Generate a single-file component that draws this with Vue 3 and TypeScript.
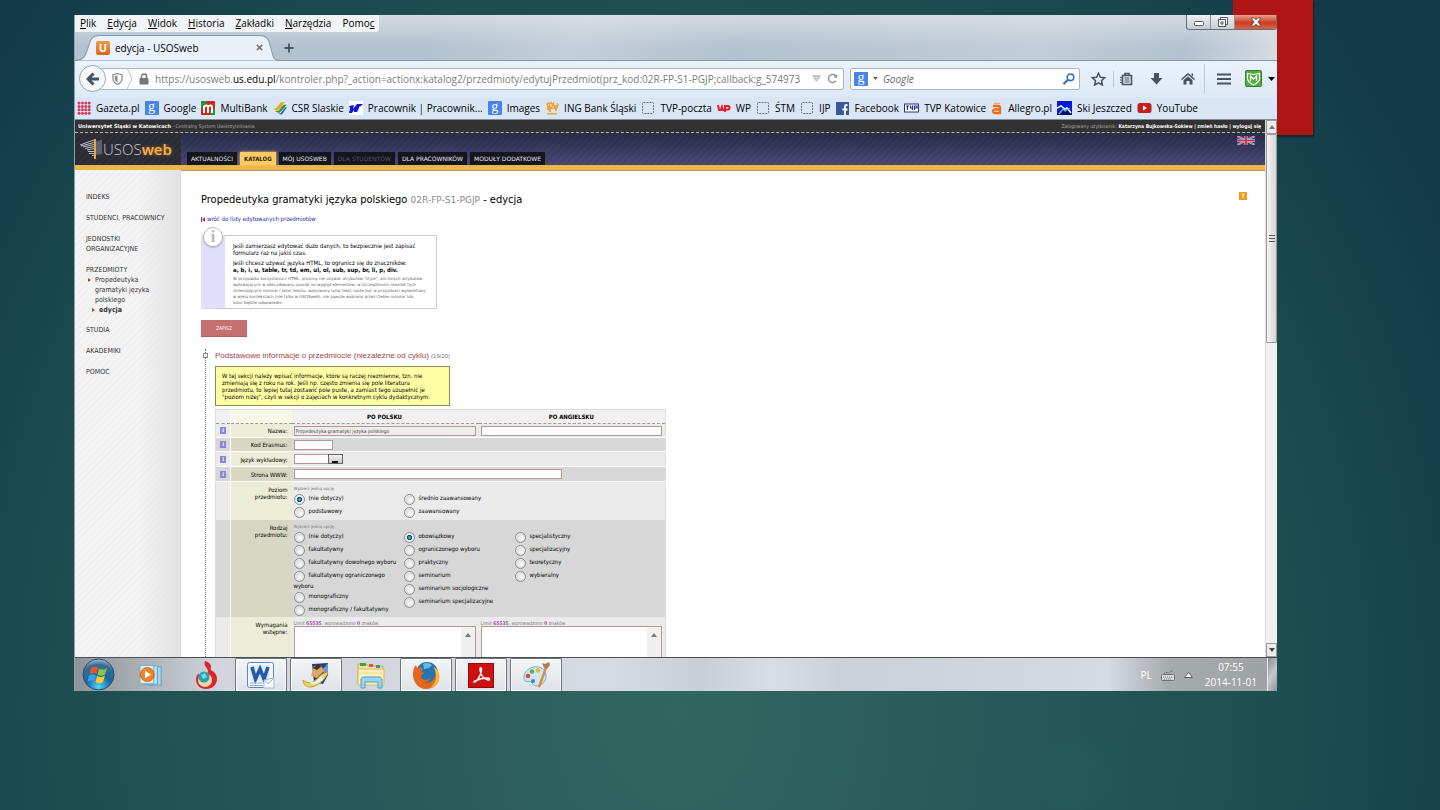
<script setup lang="ts">
import { ref } from 'vue'

interface Bookmark { label: string; icon: string }
interface Option { id: string; label: string; wrap?: string }

const menus = [
  ['', 'P', 'lik'], ['', 'E', 'dycja'], ['', 'W', 'idok'], ['', 'H', 'istoria'],
  ['', 'Z', 'akładki'], ['', 'N', 'arzędzia'], ['Pomo', 'c', ''],
]

const bookmarks: Bookmark[] = [
  { label: 'Gazeta.pl', icon: 'gazeta' },
  { label: 'Google', icon: 'google' },
  { label: 'MultiBank', icon: 'multi' },
  { label: 'CSR Slaskie', icon: 'csr' },
  { label: 'Pracownik | Pracownik...', icon: 'us' },
  { label: 'Images', icon: 'google' },
  { label: 'ING Bank Śląski', icon: 'ing' },
  { label: 'TVP-poczta', icon: 'blank' },
  { label: 'WP', icon: 'wp' },
  { label: 'ŚTM', icon: 'blank' },
  { label: 'IJP', icon: 'blank' },
  { label: 'Facebook', icon: 'fb' },
  { label: 'TVP Katowice', icon: 'tvp' },
  { label: 'Allegro.pl', icon: 'allegro' },
  { label: 'Ski Jeszczed', icon: 'ski' },
  { label: 'YouTube', icon: 'yt' },
]

const tabs = [
  { label: 'AKTUALNOŚCI', kind: '' },
  { label: 'KATALOG', kind: 'on' },
  { label: 'MÓJ USOSWEB', kind: '' },
  { label: 'DLA STUDENTÓW', kind: 'off' },
  { label: 'DLA PRACOWNIKÓW', kind: '' },
  { label: 'MODUŁY DODATKOWE', kind: '' },
]

const level = ref('nie')
const levels: Option[][] = [
  [{ id: 'nie', label: '(nie dotyczy)' }, { id: 'podst', label: 'podstawowy' }],
  [{ id: 'sred', label: 'średnio zaawansowany' }, { id: 'zaaw', label: 'zaawansowany' }],
]

const kind = ref('obow')
const kinds: Option[][] = [
  [
    { id: 'nie', label: '(nie dotyczy)' },
    { id: 'fak', label: 'fakultatywny' },
    { id: 'fakd', label: 'fakultatywny dowolnego wyboru' },
    { id: 'fako', label: 'fakultatywny ograniczonego', wrap: 'wyboru' },
    { id: 'mono', label: 'monograficzny' },
    { id: 'monof', label: 'monograficzny / fakultatywny' },
  ],
  [
    { id: 'obow', label: 'obowiązkowy' },
    { id: 'ogr', label: 'ograniczonego wyboru' },
    { id: 'prak', label: 'praktyczny' },
    { id: 'sem', label: 'seminarium' },
    { id: 'semso', label: 'seminarium socjologiczne' },
    { id: 'semsp', label: 'seminarium specjalizacyjne' },
  ],
  [
    { id: 'spty', label: 'specjalistyczny' },
    { id: 'spcy', label: 'specjalizacyjny' },
    { id: 'teor', label: 'teoretyczny' },
    { id: 'wyb', label: 'wybieralny' },
  ],
]

const apps = [
  { name: 'Windows Media Player', icon: 'wmp', open: false },
  { name: 'Redshift', icon: 'flame', open: false },
  { name: 'Word', icon: 'word', open: true },
  { name: 'Poczta', icon: 'mail', open: true },
  { name: 'Eksplorator', icon: 'folder', open: false },
  { name: 'Firefox', icon: 'firefox', open: true },
  { name: 'Adobe Reader', icon: 'pdf', open: true },
  { name: 'Paint', icon: 'paint', open: true },
]

const courseName = ref('Propedeutyka gramatyki języka polskiego')
</script>

<template>
  <div class="slide">
    <div class="ribbon"></div>
    <div class="desktop">
      <header class="titlebar">
        <div class="caption">
          <nav class="menus">
            <button v-for="m in menus" :key="m[1] + m[2]" type="button">{{ m[0] }}<u>{{ m[1] }}</u>{{ m[2] }}</button>
          </nav>
          <div class="winbtns">
            <button type="button" aria-label="Minimalizuj"><svg width="12" height="8" viewBox="0 0 12 8"><rect x="1.500" y="3.500" width="9" height="4" rx="1" fill="#fff" stroke="#555b66" /></svg></button>
            <button type="button" aria-label="Przywróć"><svg width="12" height="12" viewBox="0 0 12 12"><path d="M3.500 3V1.500h7v7H9" fill="#fff" stroke="#555b66" /><rect x="1.500" y="3.500" width="7" height="7" fill="#fff" stroke="#555b66" /><rect x="4" y="6" width="2" height="2" fill="#fff" stroke="#555b66" /></svg></button>
            <button type="button" class="close" aria-label="Zamknij"><svg width="12" height="10" viewBox="0 0 12 10"><path d="M1 1h3.500L6 3l1.500-2H11L8 5l3 4H7.500L6 7 4.500 9H1l3-4z" fill="#fff" stroke="#5b3f44" stroke-width=".8" /></svg></button>
          </div>
        </div>
        <div class="tabrow">
          <div class="tab">
            <svg class="tabshape" viewBox="0 0 206 25" preserveAspectRatio="none"><path d="M0 24.500C11 24.500 11 17 14 10 16 3 18 .5 25 .5H186c7 0 9 2.500 11 9.500 3 8 2 14.500 9 14.500" fill="#e9f1fb" stroke="#8697a8" /></svg>
            <span class="fav">U</span>
            <span class="tabname">edycja - USOSweb</span>
            <button type="button" class="tabclose" aria-label="Zamknij kartę"><svg width="7" height="7" viewBox="0 0 8 8"><path d="M1 1l6 6M7 1L1 7" stroke="#777" stroke-width="1.800" /></svg></button>
          </div>
          <button type="button" class="newtab" aria-label="Nowa karta"><svg width="10" height="10" viewBox="0 0 10 10"><path d="M5 .5v9M.5 5h9" stroke="#48525e" stroke-width="1.800" /></svg></button>
        </div>
      </header>

      <div class="toolbar">
        <button type="button" class="back" aria-label="Wstecz"><svg width="14" height="14" viewBox="0 0 14 14"><path d="M7.500 1.500L2 7l5.500 5.500M2.500 7H13" fill="none" stroke="#48525e" stroke-width="3" /></svg></button>
        <div class="urlbar">
          <svg class="shield" width="11" height="12" viewBox="0 0 12 13"><path d="M1 2l5-1.500L11 2v4c0 3-2 5-5 6.500C3 11 1 9 1 6z" fill="#fff" stroke="#8b8b8b" stroke-width="1.300" /><path d="M6 2.500L3 3.500V6c0 2 1 3.400 3 4.500z" fill="#8b8b8b" /></svg>
          <svg class="chev" width="7" height="21" viewBox="0 0 7 21"><path d="M1 0l5 10.500L1 21" fill="none" stroke="#b9c3cc" /></svg>
          <svg width="10" height="12" viewBox="0 0 10 12"><path d="M2.500 6V3.500a2.500 2.500 0 0 1 5 0V6" fill="none" stroke="#777" stroke-width="1.500" /><rect x=".5" y="5" width="9" height="6.500" rx="1" fill="#777" /></svg>
          <div class="url" role="textbox" aria-label="Adres" contenteditable="true" spellcheck="false">https://usosweb.<b>us.edu.pl</b>/kontroler.php?_action=actionx:katalog2/przedmioty/edytujPrzedmiot(prz_kod:02R-FP-S1-PGJP;callback:g_574973</div>
          <svg width="9" height="7" viewBox="0 0 9 7"><path d="M.8.8h7.400L4.500 6.200z" fill="#d3d8dc" stroke="#a9b1b8" /></svg>
          <button type="button" class="plain" aria-label="Odśwież"><svg width="11" height="11" viewBox="0 0 11 11"><path d="M8.800 7.800a4 4 0 1 1 0-4.600" fill="none" stroke="#8f99a3" stroke-width="1.500" /><path d="M10.300.8v4H6.300z" fill="#8f99a3" /></svg></button>
        </div>
        <div class="search">
          <span class="gico">g</span>
          <svg width="5" height="3" viewBox="0 0 5 3"><path d="M0 0h5L2.500 3z" fill="#666" /></svg>
          <input type="text" aria-label="Szukaj" placeholder="Google">
          <button type="button" class="plain" aria-label="Szukaj"><svg width="13" height="12" viewBox="0 0 13 12"><circle cx="8.500" cy="4.300" r="3.300" fill="none" stroke="#2f6fb7" stroke-width="1.600" /><path d="M6 6.800L1.500 11" stroke="#2f6fb7" stroke-width="2.200" /></svg></button>
        </div>
        <div class="tools">
          <button type="button" class="plain star" aria-label="Dodaj zakładkę"><svg width="15" height="14" viewBox="0 0 15 14"><path d="M7.500 1.200l1.900 4 4.300.5-3.200 3 .9 4.300-3.900-2.200L3.600 13l.9-4.300-3.200-3 4.300-.5z" fill="none" stroke="#48525e" stroke-width="1.500" /></svg></button>
          <i class="sep"></i>
          <button type="button" class="plain clip" aria-label="Zakładki"><svg width="13" height="14" viewBox="0 0 13 14"><path d="M2.500 3.500h9v9h-9zM5 3V1.500h4V3" fill="none" stroke="#48525e" stroke-width="1.600" /><path d="M4.500 6h5M4.500 8h5M4.500 10h5M0 5.500h2M0 8h2M0 10.500h2" stroke="#48525e" stroke-width="1.100" /></svg></button>
          <button type="button" class="plain" aria-label="Pobrane"><svg width="13" height="13" viewBox="0 0 13 13"><path d="M4 1h5v5h3.500l-6 6.500L.5 6H4z" fill="#48525e" /></svg></button>
          <button type="button" class="plain home" aria-label="Strona startowa"><svg width="14" height="13" viewBox="0 0 14 13"><path d="M0 7l7-6 7 6-1 1-6-5-6 5z" fill="#48525e" /><path d="M2.500 8L7 4.500 11.500 8v4.500h-3V9h-3v3.500h-3zM10.500 1.500H12v3l-1.500-1z" fill="#48525e" /></svg></button>
          <i class="sep tall"></i>
          <button type="button" class="plain burger" aria-label="Menu"><svg width="14" height="12" viewBox="0 0 14 12"><path d="M0 1.500h14M0 6h14M0 10.500h14" stroke="#48525e" stroke-width="2.200" /></svg></button>
          <button type="button" class="plain" aria-label="McAfee"><svg width="17" height="17" viewBox="0 0 17 17"><rect x=".5" y=".5" width="16" height="16" rx="1" fill="#4fae3a" stroke="#39822b" /><path d="M2.500 3.500l6 1 6-1v5c0 3-3 5-6 6.500-3-1.500-6-3.500-6-6.500z" fill="#4fae3a" stroke="#fff" stroke-width="1.200" /><path d="M5.500 11V6l3 3 3-3v5" fill="none" stroke="#fff" stroke-width="1.300" /></svg></button>
          <svg width="7" height="4" viewBox="0 0 7 4"><path d="M0 0h7L3.500 4z" fill="#000" /></svg>
        </div>
      </div>

      <nav class="bookmarks">
        <a v-for="b in bookmarks" :key="b.label" href="#">
          <svg v-if="b.icon === 'gazeta'" width="14" height="14" viewBox="0 0 14 14"><g fill="#d83a5c"><circle v-for="n in 16" :key="n" :cx="2 + ((n - 1) % 4) * 3.400" :cy="2 + Math.floor((n - 1) / 4) * 3.400" r="1.500" /></g></svg>
          <span v-else-if="b.icon === 'google'" class="gico">g</span>
          <svg v-else-if="b.icon === 'multi'" width="14" height="14" viewBox="0 0 14 14"><rect width="14" height="14" rx="1" fill="#c9281e" /><path d="M0 0h6v5L0 8zM14 14H9v-4l5-3z" fill="#3d8a35" /><path d="M3 12V5M3 6c1-2 4-2 4 0v6M7 6c1-2 4-2 4 0v6" fill="none" stroke="#fff" stroke-width="2" /></svg>
          <svg v-else-if="b.icon === 'csr'" width="14" height="14" viewBox="0 0 14 14"><path d="M0 8l3-1 5-6h4L7 8l-3 2z" fill="#e2b01e" /><path d="M2 10.500l4-1 4-5.500 4-.5-6 7-2 1.500z" fill="#3b9247" /><path d="M5 13l3-1 4-5.500 2-.5-5 7.500z" fill="#245fae" /></svg>
          <svg v-else-if="b.icon === 'us'" width="14" height="14" viewBox="0 0 14 14"><rect width="14" height="14" fill="#fff" /><path d="M0 5l5-1-1 4 4-5h6l-2 2-2 1v1l-2 4H5V9l-2 3H0l1-5z" fill="#1515e0" /></svg>
          <svg v-else-if="b.icon === 'ing'" width="14" height="14" viewBox="0 0 14 14"><path d="M2 9V5l-1-2 2-2 2 1 1-2 1 2 2-1v3h3l1 3-1 1v2h-2V8H6v3H4V9z" fill="#f5a03a" /><path d="M2 12.800h10M12 2l1 2-1 3" fill="none" stroke="#f0a850" stroke-width="1.500" /><path d="M3 4h1M6 3v3M8 5v2" stroke="#fff3df" /></svg>
          <svg v-else-if="b.icon === 'blank'" width="14" height="14" viewBox="0 0 14 14"><rect x="1.500" y="1.500" width="11" height="11" rx="1" fill="none" stroke="#66707a" stroke-dasharray="2 1" /></svg>
          <svg v-else-if="b.icon === 'wp'" width="14" height="14" viewBox="0 0 14 14"><path d="M1 4l1 5h2l1-3 1 3h2V5M8 11V5h3c2 0 2 3.500 0 3.500H9" fill="none" stroke="#e31b2b" stroke-width="2" /></svg>
          <svg v-else-if="b.icon === 'fb'" width="14" height="14" viewBox="0 0 14 14"><rect y="1" width="13" height="13" fill="#3b5998" /><path d="M11.500 4H10.500Q9 4 9 5.500V14M6.500 8.500h5" fill="none" stroke="#fff" stroke-width="1.800" /></svg>
          <svg v-else-if="b.icon === 'tvp'" width="15" height="14" viewBox="0 0 15 14"><rect x=".5" y="3" width="14" height="8" fill="#fff" stroke="#27337f" /><path d="M2 5h3M3.500 4.500V9M6.500 4.500v2.500h2M8.500 4.500V9M10.500 9V5H13v2h-2" fill="none" stroke="#27337f" stroke-width="1.200" /></svg>
          <svg v-else-if="b.icon === 'allegro'" width="12" height="14" viewBox="0 0 12 14"><path d="M3 2.500h6" stroke="#f7a46a" stroke-width="1.500" /><path d="M2 5h5q2 0 2 2v5H4.500Q2 12 2 10t2.500-1.500H9" fill="none" stroke="#f26b16" stroke-width="2.300" /></svg>
          <svg v-else-if="b.icon === 'ski'" width="15" height="14" viewBox="0 0 15 14"><rect width="15" height="14" fill="#0a16d8" /><path d="M0 14L5 7l2 3 3-3 5 5v2z" fill="#071066" /><path d="M0 7l4-2 4 3 2-1 4 5" fill="none" stroke="#fff" stroke-width="1.500" /><path d="M2 13l4-5 2 2 5-3" fill="none" stroke="#4bc7e8" stroke-width="1.300" /></svg>
          <svg v-else width="15" height="14" viewBox="0 0 15 14"><rect x=".5" y="2" width="14" height="10" rx="2.500" fill="#c5201b" /><path d="M6 4.500v5L10 7z" fill="#fff" /></svg>
          <span>{{ b.label }}</span>
        </a>
      </nav>

      <div class="viewport">
        <div class="page">
          <div class="strip">
            <span><b class="uni">Uniwersytet Śląski w Katowicach</b> - Centralny System Uwierzytelniania</span>
            <span>Zalogowany użytkownik: <b>Katarzyna Bujkowska-Sokiew | <a href="#">zmień hasło</a> | <a href="#">wyloguj się</a></b></span>
          </div>
          <div class="banner">
            <div class="logo">
              <svg width="24" height="22" viewBox="0 0 24 22"><path d="M0 7l14-5M1 8l13-3.500M3 9l11-2.500M5 10.500l9-2M7 12l7-1.500M8 13.500h6M9 15.500h5M12 17.500h2" stroke="#b9bcc6" fill="none" /><path d="M17 3v14M19 2.500v14M21 2v14" stroke="#8f929e" fill="none" /><path d="M15 1v20" stroke="#eaa63e" stroke-width="2" /></svg>
              <span class="usos">USOS</span><span class="web">web</span>
            </div>
            <nav class="ptabs"><a v-for="t in tabs" :key="t.label" href="#" :class="t.kind">{{ t.label }}</a></nav>
            <svg class="flag" width="18" height="9" viewBox="0 0 18 10" preserveAspectRatio="none"><rect width="18" height="10" fill="#33417f" /><path d="M0 0l18 10M18 0L0 10" stroke="#cfc6d6" stroke-width="2" /><path d="M0 0l18 10M18 0L0 10" stroke="#c04a5c" stroke-width=".8" /><path d="M9 0v10M0 5h18" stroke="#d8cfdb" stroke-width="3" /><path d="M9 0v10M0 5h18" stroke="#c03048" stroke-width="1.800" /></svg>
          </div>
          <div class="body">
            <aside class="side">
              <a href="#">INDEKS</a>
              <a href="#">STUDENCI, PRACOWNICY</a>
              <a href="#">JEDNOSTKI<br>ORGANIZACYJNE</a>
              <div class="group">
                <a href="#">PRZEDMIOTY</a>
                <a href="#" class="sub"><i></i><span>Propedeutyka<br>gramatyki języka<br>polskiego</span></a>
                <a href="#" class="sub deep"><i></i><b>edycja</b></a>
              </div>
              <a href="#">STUDIA</a>
              <a href="#">AKADEMIKI</a>
              <a href="#">POMOC</a>
            </aside>
            <main class="main">
              <button type="button" class="help" aria-label="Pomoc">?</button>
              <h1>Propedeutyka gramatyki języka polskiego <small>02R-FP-S1-PGJP</small> - edycja</h1>
              <a class="ret" href="#"><svg width="5" height="5" viewBox="0 0 5 5"><path d="M4 0v5L1 2.500zM0 0h1v5H0z" fill="#b0307c" /></svg>wróć do listy edytowanych przedmiotów</a>
              <section class="info">
                <span class="ibadge">i</span>
                <p>Jeśli zamierzasz edytować dużo danych, to bezpiecznie jest zapisać<br>formularz raz na jakiś czas.</p>
                <p>Jeśli chcesz używać języka HTML, to ogranicz się do znaczników:<br><b>a, b, i, u, table, tr, td, em, ul, ol, sub, sup, br, li, p, div.</b></p>
                <p class="fine">W przypadku korzystania z HTML, prosimy nie używać atrybutów "style", ani innych atrybutów<br>wpływających w zdecydowany sposób na wygląd elementów, w szczególności również tych<br>zmieniających rozmiar i kolor tekstu; wpisywany tutaj tekst może być w przyszłości wyświetlany<br>w wielu kontekstach (nie tylko w USOSweb), nie zawsze wybrany przez Ciebie rozmiar lub<br>kolor będzie odpowiedni.</p>
              </section>
              <button type="button" class="save">ZAPISZ</button>
              <section class="tree">
                <span class="toggle"></span>
                <h2>Podstawowe informacje o przedmiocie (niezależne od cyklu) <small>(19/20)</small></h2>
                <p class="note">W tej sekcji należy wpisać informacje, które są raczej niezmienne, tzn. nie<br>zmieniają się z roku na rok. Jeśli np. często zmienia się pole literatura<br>przedmiotu, to lepiej tutaj zostawić pole puste, a zamiast tego uzupełnić je<br>"poziom niżej", czyli w sekcji o zajęciach w konkretnym cyklu dydaktycznym.</p>
                <table>
                  <colgroup><col class="c1"><col class="c2"><col class="c3"><col class="c3"></colgroup>
                  <thead><tr><th></th><th class="lab"></th><th>PO POLSKU</th><th>PO ANGIELSKU</th></tr></thead>
                  <tbody>
                    <tr>
                      <td><i class="ii">i</i></td><th class="lab"><label for="nazwa">Nazwa:</label></th>
                      <td><input id="nazwa" v-model="courseName" class="full ro" type="text" readonly></td>
                      <td><input class="full" type="text" aria-label="Nazwa po angielsku"></td>
                    </tr>
                    <tr class="dark">
                      <td><i class="ii">i</i></td><th class="lab"><label for="erasmus">Kod Erasmus:</label></th>
                      <td colspan="2"><input id="erasmus" class="w39" type="text"></td>
                    </tr>
                    <tr class="roomy">
                      <td><i class="ii">i</i></td><th class="lab"><label for="jezyk">Język wykładowy:</label></th>
                      <td colspan="2"><span class="sel"><select id="jezyk"><option></option></select><i></i></span></td>
                    </tr>
                    <tr class="dark roomy">
                      <td><i class="ii">i</i></td><th class="lab"><label for="www">Strona WWW:</label></th>
                      <td colspan="2"><input id="www" class="w268" type="text"></td>
                    </tr>
                    <tr class="tall level">
                      <td></td><th class="lab">Poziom<br>przedmiotu:</th>
                      <td colspan="2">
                        <div class="hint">Wybierz jedną opcję.</div>
                        <div class="opts">
                          <div v-for="(col, ci) in levels" :key="ci">
                            <label v-for="o in col" :key="o.id"><input v-model="level" type="radio" name="level" :value="o.id"><span>{{ o.label }}</span></label>
                          </div>
                        </div>
                      </td>
                    </tr>
                    <tr class="tall dark kind">
                      <td></td><th class="lab">Rodzaj<br>przedmiotu:</th>
                      <td colspan="2">
                        <div class="hint">Wybierz jedną opcję.</div>
                        <div class="opts">
                          <div v-for="(col, ci) in kinds" :key="ci">
                            <label v-for="o in col" :key="o.id"><input v-model="kind" type="radio" name="kind" :value="o.id"><span>{{ o.label }}</span><em v-if="o.wrap">{{ o.wrap }}</em></label>
                          </div>
                        </div>
                      </td>
                    </tr>
                    <tr class="tall req">
                      <td></td><th class="lab">Wymagania<br>wstępne:</th>
                      <td v-for="l in ['po polsku', 'po angielsku']" :key="l">
                        <div class="limit">Limit <b>65535</b>, wprowadzono <b>0</b> znaków</div>
                        <div class="area"><textarea :aria-label="'Wymagania wstępne ' + l"></textarea><span><svg width="6" height="4" viewBox="0 0 6 4"><path d="M3 0l3 4H0z" fill="#777" /></svg></span></div>
                      </td>
                    </tr>
                  </tbody>
                </table>
              </section>
            </main>
          </div>
        </div>
        <div class="scroll">
          <button type="button" aria-label="W górę"><svg width="6" height="4" viewBox="0 0 6 4"><path d="M3 0l3 4H0z" fill="#777" /></svg></button>
          <div class="track"><div class="thumb"><i></i><i></i><i></i></div></div>
          <button type="button" aria-label="W dół"><svg width="6" height="4" viewBox="0 0 6 4"><path d="M0 0h6L3 4z" fill="#444" /></svg></button>
        </div>
      </div>

      <footer class="taskbar">
        <button type="button" class="start" aria-label="Start">
          <svg width="33" height="33" viewBox="0 0 33 33">
            <defs><radialGradient id="orb" cx=".5" cy=".9" r=".9"><stop offset="0" stop-color="#4fd6f5" /><stop offset=".45" stop-color="#1767a5" /><stop offset=".8" stop-color="#3d6c94" /><stop offset="1" stop-color="#a9c4d8" /></radialGradient></defs>
            <circle cx="16.500" cy="16.500" r="15.500" fill="url(#orb)" stroke="#264c6d" />
            <path d="M9 10c3-2 5-1.500 7 0l-1.500 6c-2-1.500-4-1.500-7 0z" fill="#e8542a" /><path d="M17 10.500c2.500 1.500 5 1.500 8-.5l-2 6.500c-2.500 2-5 1.500-7.500 0z" fill="#8cc63e" />
            <path d="M7 17.500c3-2 5-1.500 7 0l-1.500 6c-2-1.500-4-1.500-7 0z" fill="#38a0e6" /><path d="M15 18c2.500 1.500 5 1.500 8-.5l-2 6.500c-2.500 2-5 1.500-7.500 0z" fill="#fdc92d" />
          </svg>
        </button>
        <button v-for="a in apps" :key="a.name" type="button" class="app" :class="{ open: a.open }" :aria-label="a.name">
          <svg v-if="a.icon === 'wmp'" width="26" height="24" viewBox="0 0 28 26"><path d="M11 4h14v20H11z" fill="#a8d5ea" stroke="#5d9fc0" /><path d="M7 3h14v20H7z" fill="#bfe2f1" stroke="#5d9fc0" /><path d="M2 2.500h15v20H2z" fill="#d6edf7" stroke="#6ba8c6" /><circle cx="10" cy="12.500" r="7.500" fill="#f08427" stroke="#c9691b" /><path d="M7.500 8.500v8l6.500-4z" fill="#fff" /></svg>
          <svg v-else-if="a.icon === 'flame'" width="26" height="30" viewBox="0 0 26 30"><path d="M12 1c3 1 5 2 6 5 0 2-1 3 0 4 4 2 6 5 6 9 0 6-5 10-11 10S3 25 3 19c0-2 1-4 2-5 2 1 10 2 10-3 0-3-5-5-3-10z" fill="#de2330" /><circle cx="12" cy="20" r="7" fill="#e9dca0" /><circle cx="11" cy="17" r="5.500" fill="#24a0b0" /><path d="M8 15l4-2 2 4-4 2z" fill="#83d7d5" /></svg>
          <svg v-else-if="a.icon === 'word'" width="28" height="27" viewBox="0 0 28 27"><rect x=".5" y=".5" width="26" height="25" rx="2" fill="#f4f8fd" stroke="#5d87bd" /><path d="M3 3h19v16H3z" fill="#e0ebf8" /><path d="M5 5l3.500 12L13 7l4 10L21 5" fill="none" stroke="#2459a8" stroke-width="3.600" /><path d="M3 21h13M3 23.500h13" stroke="#8fb0da" /><path d="M17 18l10-2v10H17z" fill="#fff" stroke="#9fb9da" /><path d="M18 18l3 4 5-5" fill="none" stroke="#9fb9da" /></svg>
          <svg v-else-if="a.icon === 'mail'" width="28" height="26" viewBox="0 0 28 26"><path d="M10 2l16-1v12l-5 9-9-2z" fill="#253f78" /><path d="M26 1v12l-7-4z" fill="#6e96cf" /><path d="M12 4l7-1 3 6-7 7-6-2z" fill="#d9a96a" /><path d="M11 6l5-4 4 2-5 4z" fill="#4a3020" /><path d="M1 18c5 5 11 2 15-2 3-3 6-6 10-5-3 6-9 13-17 14-5 0-8-3-8-7z" fill="#f2d564" stroke="#c39b26" /><path d="M6 19l7 1 7-6 1 4-9 5z" fill="#e8f0f8" /></svg>
          <svg v-else-if="a.icon === 'folder'" width="30" height="28" viewBox="0 0 30 28"><path d="M2 3h8l2 2h15v18H2z" fill="#f5e39b" stroke="#c9ab4d" /><path d="M4 2h6v3H4z" fill="#43a047" /><path d="M13 3h4v3h-4z" fill="#e0553d" /><path d="M20 4h4v3h-4z" fill="#3e87c9" /><path d="M2 8h26v16H2z" fill="#fbf0bd" stroke="#d6bb60" /><path d="M2 12h26" stroke="#ead890" /><path d="M5 27v-8c0-2 1-3 3-3h15c2 0 3 1 3 3v8h-4v-6H9v6z" fill="#9bd4ee" stroke="#539fc6" /></svg>
          <svg v-else-if="a.icon === 'firefox'" width="28" height="28" viewBox="0 0 28 28"><circle cx="15" cy="12" r="11" fill="#2475b5" /><path d="M11 3c3-2 7-1 9 1l-3 3-5 1z" fill="#6bb8df" /><path d="M1 13c0-4 1-7 3-9l1 3c2-1 4-1 6 1l-2 3 3 1c-1 2-3 2-3 4 1 3 5 4 9 1-1 4-4 5-6 5 5 1 10-2 11-7 1-4 0-7-2-9 5 3 7 8 6 12-1 6-6 10-13 10C6 28 1 21 1 13z" fill="#e5661b" /><path d="M22 6c5 3 6 8 5 12-1 5-5 8-9 9 4-3 6-7 6-12 0-3-1-6-2-9z" fill="#f9b92c" /></svg>
          <svg v-else-if="a.icon === 'pdf'" width="26" height="25" viewBox="0 0 26 25"><rect x=".5" y=".5" width="25" height="24" fill="#cf1010" stroke="#8f0d0d" /><path d="M6 19c3 0 7-7 7.500-12 .2-3-2-3-1.500 0 .6 5 4 9 8 10 2 .3 2-2 0-2-5-.3-10 1.500-13 3-1 .6-1.500 1-1 1z" fill="none" stroke="#fff" stroke-width="1.500" /></svg>
          <svg v-else width="30" height="28" viewBox="0 0 30 28"><path d="M13 6c7-1 12 3 12 9s-5 10-10 10c-3 0-3-3-5-4s-6 1-7-3C2 12 7 7 13 6z" fill="#cfe7f4" stroke="#77aecd" /><circle cx="7" cy="15" r="2.300" fill="#d94a3a" /><circle cx="11" cy="10.500" r="2.300" fill="#5fae4a" /><circle cx="17" cy="9.500" r="2.300" fill="#e8b93a" /><circle cx="12" cy="20" r="2" fill="#3b84c4" /><path d="M24 6l-7 19 1 2 2-2 6-18z" fill="#e38b3a" /><path d="M23 7l-2-5 3 1 4-2 1 3-3 4z" fill="#b07f52" /></svg>
        </button>
        <div class="tray">
          <span class="lang">PL</span>
          <svg width="14" height="12" viewBox="0 0 14 12"><rect x=".5" y="5.500" width="13" height="6" rx="1" fill="#d9dcde" stroke="#6b6f72" /><path d="M2 8h10M3 10h8" stroke="#6b6f72" stroke-dasharray="1 1" /><path d="M3 5c1-3 5 0 6-2 1-1 2-1 3-1" fill="none" stroke="#7b7f82" /></svg>
          <svg width="9" height="6" viewBox="0 0 9 6"><path d="M4.500 .5L8.500 5.500h-8z" fill="#fff" stroke="#5b6064" /></svg>
          <time>07:55<br>2014-11-01</time>
        </div>
        <button type="button" class="peek" aria-label="Pokaż pulpit"></button>
      </footer>
    </div>
  </div>
</template>

<style>
body { margin: 0; }
</style>

<style scoped>
* { box-sizing: border-box; }
button { border: 0; padding: 0; background: none; font: inherit; color: inherit; cursor: pointer; }
a { color: inherit; text-decoration: none; }
svg { display: block; flex: none; }
.slide {
  position: relative;
  height: 100vh;
  padding: 15px 163px 119px 74px;
  overflow: hidden;
  background:
    radial-gradient(circle at 75% 96%, #22606166 0, #22606100 50px),
    radial-gradient(ellipse 55% 120% at 47% 88%, #316760 0, #28595a 40%, #1d4f52 75%, #123a49 110%);
  font: 10px/14px "Open Sans", "Noto Sans", sans-serif;
}
.ribbon { position: absolute; top: 0; right: 127px; width: 80px; height: 135px; background: #ae1512; box-shadow: 1px 2px 2px #0006; }
.desktop { position: relative; display: flex; flex-direction: column; height: 100%; border-left: 1px solid #8fa3ab; }

.titlebar { flex: none; background: linear-gradient(115deg, #c6d0d900 30%, #dde3e866 42%, #c6d0d900 55%, #dfe4e955 80%, #c6d0d900 92%, #e8eaecaa), linear-gradient(#d3dade, #b3c2d0 70%); color: #000; }
.caption { display: flex; justify-content: space-between; align-items: flex-start; height: 20px; }
.menus { display: flex; gap: 11px; padding: 1px 5px; background: #f1f3f4; border-radius: 0 0 3px 0; }
.menus button { line-height: 15px; }
.winbtns { display: flex; height: 15px; border: 1px solid #66707c; border-top: 0; border-radius: 0 0 3px 3px; background: linear-gradient(#eef0f2, #c5ccd3); }
.winbtns button { display: flex; align-items: center; justify-content: center; width: 24px; border-right: 1px solid #8a929c; }
.winbtns button.close { width: 41px; border: 0; background: linear-gradient(#e9a391, #cc3a22 55%, #d9664a); }
.tabrow { display: flex; align-items: center; gap: 1px; height: 26px; border-bottom: 1px solid #8697a8; }
.tab { position: relative; display: flex; align-items: center; gap: 5px; width: 204px; height: 26px; padding: 0 16px 0 21px; }
.tabshape { position: absolute; left: 0; top: 0; width: 100%; height: 26px; }
.tab > :not(.tabshape) { position: relative; }
.fav { width: 14px; height: 14px; border-radius: 2px; background: linear-gradient(#f39a45, #dc6517); color: #fff; font-weight: 700; font-size: 11px; line-height: 14px; text-align: center; }
.tabname { flex: 1; }
.newtab { padding: 4px; }

.toolbar { flex: none; display: flex; align-items: center; height: 36px; padding: 0 2px 1px 4px; background: linear-gradient(#eaf2fb, #dde9f6); }
.back { position: relative; z-index: 1; display: flex; align-items: center; justify-content: center; width: 27px; height: 27px; border: 1px solid #98a7b5; border-radius: 50%; background: #f5f9fd; }
.urlbar { flex: 1; min-width: 0; display: flex; align-items: center; gap: 6px; height: 22px; margin-left: -12px; padding: 0 5px 0 17px; border: 1px solid #a9b7c4; border-radius: 2px; background: #fff; color: #7b7b7b; }
.chev { margin-left: -3px; }
.url { flex: 1; min-width: 0; overflow: hidden; white-space: nowrap; outline: 0; }
.url b { font-weight: 400; color: #000; }
.search { display: flex; align-items: center; gap: 5px; width: 230px; height: 22px; margin-left: 6px; padding: 0 4px 0 3px; border: 1px solid #a9b7c4; border-radius: 2px; background: #fff; }
.search input { flex: 1; min-width: 0; border: 0; padding: 0; outline: 0; background: none; font: italic 10px/14px "Open Sans", "Noto Sans", sans-serif; }
.search input::placeholder { color: #666; }
.gico { flex: none; width: 14px; height: 14px; border-radius: 1px; background: #4684ea; color: #fff; font: 400 14px/11px "Liberation Serif", serif; text-align: center; }
.tools { display: flex; align-items: center; gap: 6px; padding-left: 11px; }
.clip { margin: 0 11px 0 0; }
.home { margin: 0 3px 0 12px; }
.burger { margin: 0 8px 0 6px; }
.star { margin-right: 1px; }
.sep { width: 1px; height: 16px; background: #bccbd9; }
.sep.tall { height: 30px; }

.bookmarks { flex: none; display: flex; align-items: center; gap: 5px; height: 23px; padding: 0 2px; overflow: hidden; background: #d9e6f5; border-bottom: 1px solid #7e909f; color: #000; white-space: nowrap; }
.bookmarks a { display: flex; align-items: center; gap: 5px; }

.viewport { flex: 1; min-height: 0; display: flex; background: #fff; font-family: "DejaVu Sans Condensed", "DejaVu Sans", sans-serif; }
.page { flex: 1; min-width: 0; display: flex; flex-direction: column; overflow: hidden; }
.strip { flex: none; display: flex; justify-content: space-between; height: 13px; padding: 0 4px 0 3px; border-bottom: 1px dashed #b5b5b5; background: #323232; color: #aaa; font-size: 5px; line-height: 12px; }
.strip b { color: #fff; }
.strip .uni { font-family: "DejaVu Sans", sans-serif; }
.banner { flex: none; display: flex; align-items: flex-end; height: 37px; border-bottom: 5px solid #ecb546; background: repeating-linear-gradient(135deg, #0000 0 3px, #0001 3px 5px), linear-gradient(#2b2d4a, #474a76); box-shadow: 0 1px 0 #a9957a; }
.logo { display: flex; align-items: center; width: 106px; height: 32px; padding-left: 5px; background: repeating-linear-gradient(135deg, #2a2b33 0 3px, #2f3038 3px 5px); white-space: nowrap; }
.usos { margin-left: -1px; color: #c9cbd4; font: 300 15px/24px "Open Sans", sans-serif; }
.web { color: #f0b04c; font: 600 15px/24px "Open Sans", sans-serif; text-shadow: 0 0 3px #b0702a; }
.ptabs { display: flex; gap: 3px; padding-left: 6px; flex: 1; }
.ptabs a { padding: 0 4px; background: #14151f; color: #e8e8ee; font: 6px/13px "DejaVu Sans", sans-serif; white-space: nowrap; }
.ptabs a.on { background: #fdcb62; color: #2b2412; font-family: "DejaVu Sans Condensed", "DejaVu Sans", sans-serif; font-weight: 700; box-shadow: 0 0 3px #fdcb62; }
.ptabs a.off { color: #55565c; }
.flag { align-self: flex-start; margin: 3px 10px 0 0; }
.body { flex: 1; min-height: 0; display: flex; }
.side { flex: none; width: 106px; padding: 22px 0 0 11px; display: flex; flex-direction: column; gap: 11px; border-right: 1px solid #dcdcdc; background: linear-gradient(90deg, #e2e2e200 60%, #e2e2e2), repeating-linear-gradient(135deg, #f4f4f4 0 3px, #f0f0f0 3px 5px); color: #333; font-size: 7px; line-height: 10px; }
.side a { display: block; white-space: nowrap; }
.side .sub { display: flex; gap: 4px; padding-left: 2px; }
.side .deep { padding-left: 6px; }
.group { margin-bottom: -1px; }
.sub i { width: 0; height: 0; margin-top: 3px; border: 2px solid transparent; border-left: 3px solid #8a5a18; border-right: 0; }
.main { position: relative; flex: 1; min-width: 0; padding: 23px 20px 0 20px; color: #000; }
.help { position: absolute; right: 18px; top: 22px; width: 8px; height: 8px; background: #f29a1d; color: #fff; font-size: 6px; line-height: 8px; font-weight: 700; }
h1 { margin: 0; font-size: 11px; line-height: 14px; font-weight: 400; }
h1 small { color: #888; font: 9px/14px "DejaVu Sans", sans-serif; }
.ret { display: flex; align-items: center; width: max-content; gap: 1px; margin-top: 7px; color: #27279a; font-size: 6px; line-height: 10px; }
.info { position: relative; width: 236px; height: 74px; margin-top: 11px; padding: 6px 0 0 8px; border: 1px solid #c9c6ea; border-left: 24px solid #e0defb; font-size: 6px; line-height: 7px; white-space: nowrap; }
.info p { margin: 0 0 3px; }
.info .fine { color: #666; font: 4px/6px "DejaVu Sans", sans-serif; }
.ibadge { position: absolute; left: -22px; top: -9px; width: 20px; height: 20px; border: 1px solid #bcbcc8; border-radius: 50%; background: #fff; color: #b4b4c2; font: 700 16px/18px "Liberation Serif", serif; text-align: center; box-shadow: 0 1px 1px #0003; }
.save { display: block; width: 46px; height: 17px; margin-top: 11px; background: #c57070; border-bottom: 1px solid #a85f5f; color: #fff; font-size: 5px; }
.tree { position: relative; margin: 12px 0 0 4px; padding-left: 9px; border-left: 1px dotted #777; }
.toggle { position: absolute; left: -3px; top: 4px; width: 5px; height: 5px; border: 1px solid #888; background: #fff; }
h2 { margin: 0; color: #9c4747; font: 400 8px/14px "Liberation Sans", sans-serif; }
h2 small { color: #777; font-size: 6px; }
.note { width: 235px; margin: 3px 0; padding: 5px 6px; border: 1px solid #8a8a55; background: #feffa5; font-size: 6px; line-height: 7px; white-space: nowrap; }
table { width: 451px; table-layout: fixed; border-collapse: collapse; border: 1px solid #dcdcdc; font-size: 6px; line-height: 7px; background: #ebebeb; }
.c1 { width: 15px; } .c2 { width: 61px; }
th, td { padding: 0 3px 0 2px; font-weight: 400; text-align: left; height: 14px; vertical-align: middle; border-bottom: 1px solid #fff; }
.roomy td, .roomy th { height: 15px; }
thead th { background: #f1f1f1; border-bottom: 1px dashed #999; text-align: center; font-weight: 700; }
th.lab { padding: 0 4px; text-align: right; background: #ecedd6; border-left: 1px solid #fff; }
thead th.lab { background: #f7f7ea; }
.dark td { background: #d7d7d7; }
.dark th.lab { background: #d8d8c2; }
.ii { display: block; width: 6px; height: 7px; margin-left: 2px; background: #8a86d8; color: #fff; font: 700 5px/7px "DejaVu Sans", sans-serif; text-align: center; }
td input[type="text"], select { display: block; height: 10px; padding: 0 1px; border: 1px solid #bb9494; border-radius: 0; background: #fff; font: 5px/8px "DejaVu Sans Condensed", "DejaVu Sans", sans-serif; color: #444; outline: 0; }
td input.full { width: 100%; }
td input.ro { background: #ededed; }
.w39 { width: 39px; }
.w268 { width: 268px; }
.sel { position: relative; display: block; width: 49px; }
.sel select { width: 49px; appearance: none; }
.sel i { position: absolute; right: 0; top: 0; width: 15px; height: 10px; border: 1px solid #666; background: linear-gradient(#111, #111) center 6px / 6px 2px no-repeat, linear-gradient(#f4f4f4, #c8c8c8); pointer-events: none; }
.tall td, .tall th { vertical-align: top; border-bottom: 0; }
.tall th.lab { padding-top: 4px; }
.level td { height: 38px; }
.kind td { height: 97px; }
.hint { padding-top: 3px; color: #777; font: 4px/7px "DejaVu Sans", sans-serif; }
.opts { display: grid; grid-template-columns: 110px 111px 1fr; padding-top: 1px; }
.opts label { display: flex; flex-wrap: wrap; align-content: flex-start; column-gap: 4px; white-space: nowrap; height: 13px; }
.opts label:has(em) { height: 21px; }
.opts em { flex: 0 0 100%; font-style: normal; line-height: 8px; }
.opts span { line-height: 9px; }
.opts input { appearance: none; width: 11px; height: 11px; margin: 1px 0 0; border: 1px solid #8b8b8b; border-radius: 50%; background: radial-gradient(circle at 60% 60%, #fff 0, #dcdcdc 60%, #f5f5f5 70%); }
.opts input:checked { background: radial-gradient(circle, #5fc2ea 0, #0f3f66 38%, #e6eef3 46%); }
.limit { padding-top: 3px; color: #777; font-size: 5px; line-height: 6px; }
.limit b { color: #a653b4; }
.area { display: flex; height: 56px; border: 1px solid #bb9494; background: #fff; }
.area textarea { flex: 1; min-width: 0; border: 0; padding: 0; resize: none; outline: 0; font-size: 6px; }
.area span { display: flex; justify-content: center; width: 14px; padding-top: 6px; background: #f0f0f0; }

.scroll { display: flex; flex-direction: column; width: 12px; background: #f0f0f0; border-left: 1px solid #dedede; }
.scroll button { display: flex; align-items: center; justify-content: center; height: 14px; border: 1px solid #9a9a9a; background: #ececec; }
.track { flex: 1; }
.thumb { display: flex; flex-direction: column; align-items: center; justify-content: center; gap: 2px; height: 41%; border: 1px solid #9a9a9a; border-radius: 1px; background: linear-gradient(90deg, #f5f5f5, #d5d5d5); }
.thumb i { width: 6px; height: 1px; background: #555; }

.taskbar { flex: none; display: flex; align-items: stretch; gap: 3px; height: 34px; border-top: 1px solid #4b5054; background: linear-gradient(90deg, #8e9498 0, #a8adb2 5%, #d0d6dc 12%, #d6dbe2 45%, #c9cfd5 52%, #d9dde4 58%, #cbd1d7 64%, #d6dae3 86%, #a6abae 91%, #9da2a5 100%); }
.start { width: 47px; display: flex; align-items: center; justify-content: center; }
.app { display: flex; align-items: center; justify-content: center; width: 52px; }
.app.open { border: 1px solid #6e757c; border-bottom: 0; border-radius: 2px 2px 0 0; background: linear-gradient(#f3f5f7, #dfe3e8); box-shadow: inset 0 0 0 1px #fffb; }
.tray { margin-left: auto; display: flex; align-items: center; gap: 9px; color: #fff; padding-right: 7px; }
.tray time { padding-left: 3px; text-align: center; line-height: 15px; }
.peek { width: 10px; border-left: 1px solid #e7eaec; background: linear-gradient(120deg, #888e92, #c5c9cc, #8c9296); }
</style>
